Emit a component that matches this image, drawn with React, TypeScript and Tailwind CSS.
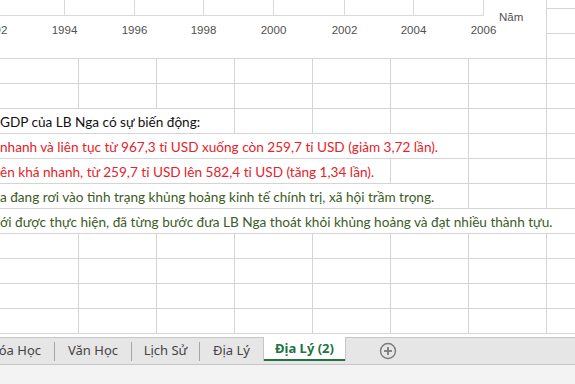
import React from "react";

const COLS = [79, 78, 78, 78, 78, 78, 78, 28];

function Cells({ from }: { from: number }) {
  return (
    <>
      {COLS.slice(from).map((w, i) => (
        <div
          key={i}
          className={`h-full shrink-0 ${from + i < 7 ? "border-r border-[#d4d4d4]" : ""}`}
          style={{ width: w }}
        />
      ))}
    </>
  );
}

function Row({ span = 0, text, color }: { span?: number; text?: string; color?: string }) {
  const spanWidth = COLS.slice(0, span).reduce((a, b) => a + b, 0);
  return (
    <div className="flex h-[25px] shrink-0 border-b border-[#d4d4d4]">
      {span > 0 && (
        <div
          className={`relative flex h-full shrink-0 items-end pb-[2px] ${span < 8 ? "border-r border-[#d4d4d4]" : ""}`}
          style={{ width: spanWidth }}
        >
          <span
            className="whitespace-nowrap text-[13.6px] leading-[17px] font-['Lato',sans-serif]"
            style={{ color }}
          >
            {text}
          </span>
        </div>
      )}
      <Cells from={span} />
    </div>
  );
}

function Chart() {
  const xs = [-6, 64, 134, 203, 273, 344, 413, 483];
  const years = [1992, 1994, 1996, 1998, 2000, 2002, 2004, 2006];
  return (
    <svg width="546" height="58" className="block">
      {xs.slice(1).map((x) => (
        <line key={x} x1={x + 0.5} y1={0} x2={x + 0.5} y2={15} stroke="#d9d9d9" strokeWidth={1} />
      ))}
      <line x1={0} y1={15.5} x2={484} y2={15.5} stroke="#d9d9d9" strokeWidth={1} />
      {xs.map((x, i) => (
        <text
          key={i}
          x={x + 0.5}
          y={34}
          textAnchor="middle"
          fontFamily="'Liberation Sans', Arial, sans-serif"
          fontSize="11.5"
          fill="#505050"
        >
          {years[i]}
        </text>
      ))}
      <text x={499} y={20.5} fontFamily="'Liberation Sans', Arial, sans-serif" fontSize="11.5" fill="#505050">
        Năm
      </text>
    </svg>
  );
}

function Tab({ label, width, align = "center" }: { label: string; width: number; align?: "center" | "end" }) {
  return (
    <div
      className={`flex h-full shrink-0 items-center ${align === "end" ? "justify-end pr-[13px]" : "justify-center"}`}
      style={{ width }}
    >
      <span className="whitespace-nowrap text-[13px] text-[#444444] font-['Noto_Sans',sans-serif]">{label}</span>
    </div>
  );
}

function Sep() {
  return <div className="h-[19px] w-px shrink-0 self-center bg-[#a6a6a6]" />;
}

export default function App() {
  return (
    <div className="flex h-[384px] w-[575px] flex-col overflow-hidden bg-white">
      <div className="flex h-[334px] shrink-0 flex-col">
        <div className="flex h-[59px] shrink-0">
          <div className="h-[59px] w-[547px] shrink-0 border-r border-b border-[#d4d4d4] bg-white">
            <Chart />
          </div>
          <div className="flex w-[28px] flex-col">
            <div className="h-[9px] shrink-0 border-b border-[#d4d4d4]" />
            <div className="h-[25px] shrink-0 border-b border-[#d4d4d4]" />
            <div className="h-[25px] shrink-0 border-b border-[#d4d4d4]" />
          </div>
        </div>
        <Row />
        <Row />
        <Row span={3} text="GDP của LB Nga có sự biến động:" color="#111111" />
        <Row
          span={6}
          text="nhanh và liên tục từ 967,3 tỉ USD xuống còn 259,7 tỉ USD (giảm 3,72 lần)."
          color="#e5232a"
        />
        <Row span={5} text="ên khá nhanh, từ 259,7 tỉ USD lên 582,4 tỉ USD (tăng 1,34 lần)." color="#e5232a" />
        <Row
          span={6}
          text="a đang rơi vào tình trạng khủng hoảng kinh tế chính trị, xã hội trầm trọng."
          color="#3d5c26"
        />
        <Row
          span={8}
          text="ới được thực hiện, đã từng bước đưa LB Nga thoát khỏi khủng hoảng và đạt nhiều thành tựu."
          color="#3d5c26"
        />
        <Row />
        <Row />
        <Row />
        <Row />
      </div>
      <div className="h-[3px] shrink-0 bg-white" />
      <div className="flex h-[28px] shrink-0 border-y border-[#c6c6c6] bg-[#e6e6e6]">
        <Tab label="Hóa Học" width={54} align="end" />
        <Sep />
        <Tab label="Văn Học" width={76} />
        <Sep />
        <Tab label="Lịch Sử" width={67} />
        <Sep />
        <Tab label="Địa Lý" width={63} />
        <div className="-mt-px flex h-[24px] w-[83px] shrink-0 flex-col border-x border-[#c6c6c6] bg-white">
          <div className="flex flex-1 items-center justify-center pt-[1px]">
            <span className="whitespace-nowrap text-[13px] font-bold text-[#217346] font-['Noto_Sans',sans-serif]">
              Địa Lý (2)
            </span>
          </div>
          <div className="h-[2px] bg-[#217346]" />
        </div>
        <div className="flex w-[84px] shrink-0 items-center justify-center">
          <svg width="18" height="18" viewBox="0 0 18 18">
            <circle cx="9" cy="9" r="7.5" fill="none" stroke="#7a7a7a" strokeWidth="1.4" />
            <line x1="9" y1="5" x2="9" y2="13" stroke="#7a7a7a" strokeWidth="1.8" />
            <line x1="5" y1="9" x2="13" y2="9" stroke="#7a7a7a" strokeWidth="1.8" />
          </svg>
        </div>
      </div>
      <div className="flex-1 bg-[#f3f3f3]" />
    </div>
  );
}
